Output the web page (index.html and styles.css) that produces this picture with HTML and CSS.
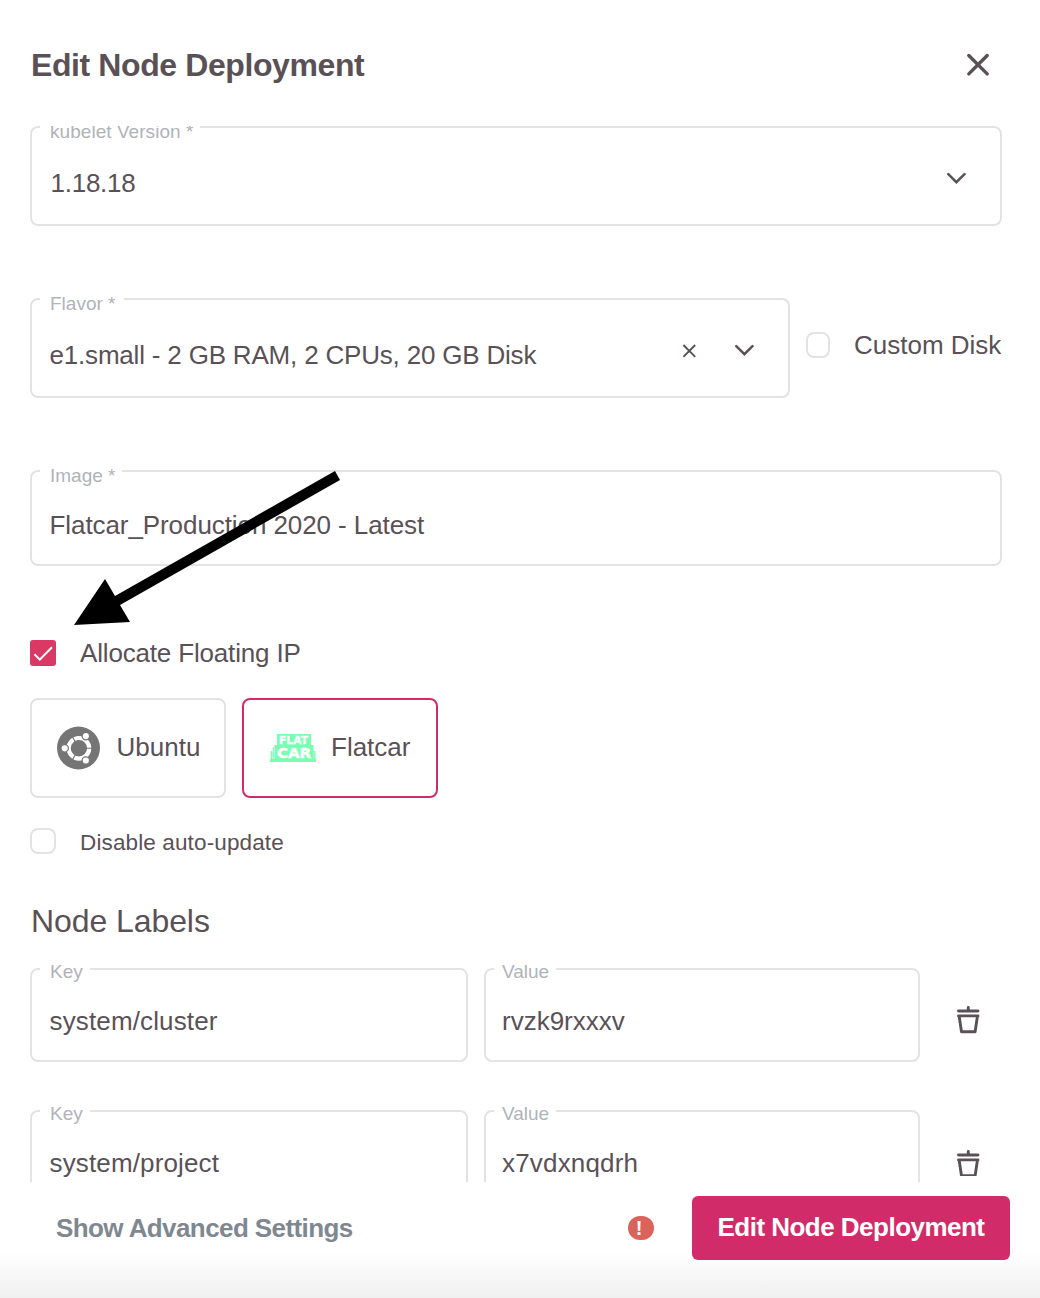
FILE: index.html
```html
<!DOCTYPE html>
<html lang="en">
<head>
<meta charset="utf-8">
<title>Edit Node Deployment</title>
<link rel="stylesheet" href="styles.css">
</head>
<body>
<div class="dialog">
  <header class="header">
    <h1 class="title">Edit Node Deployment</h1>
    <svg class="close" viewBox="0 0 24 24"><path d="M2.8 2.5 21.2 20.9M21.2 2.5 2.8 20.9"/></svg>
  </header>

  <main class="content">
    <div class="field tall">
      <span class="label kubelet">kubelet Version *</span>
      <span class="value version">1.18.18</span>
      <svg class="chevron" viewBox="0 0 20 12"><path d="M2.3 2.2 10.4 10.2 18.5 2.2"/></svg>
    </div>

    <div class="flavor-row">
      <div class="field tall flavor">
        <span class="label flavor-label">Flavor *</span>
        <span class="value flavor-value">e1.small - 2 GB RAM, 2 CPUs, 20 GB Disk</span>
        <svg class="clear" viewBox="0 0 14 14"><path d="M1.4 1 13.2 12.8M13.2 1 1.4 12.8"/></svg>
        <svg class="chevron" viewBox="0 0 20 12"><path d="M2.3 2.2 10.4 10.2 18.5 2.2"/></svg>
      </div>
      <span class="checkbox narrow"></span>
      <span class="text custom">Custom Disk</span>
    </div>

    <div class="field image">
      <span class="label image-label">Image *</span>
      <span class="value image-value">Flatcar_Production 2020 - Latest</span>
    </div>

    <div class="check-row floating">
      <span class="checkbox checked"><svg viewBox="0 0 26 26"><path d="M4.5 14.3 9.8 19.6 22 7.2"/></svg></span>
      <span class="text allocate">Allocate Floating IP</span>
    </div>

    <div class="systems">
      <div class="system">
        <svg class="ubuntu" viewBox="0 0 44 44">
          <circle cx="21.5" cy="22" r="21.5" fill="#757575"/>
          <circle cx="21.9" cy="22.3" r="10.3" fill="none" stroke="#fff" stroke-width="4.2"/>
          <g stroke="#757575" stroke-width="1.1"><path d="M29.3 22.3h7M18.6 16.4 14.9 10M18.6 28.2 14.9 34.6"/></g>
          <g fill="#fff" stroke="#757575" stroke-width="1.2"><circle cx="7.7" cy="22.3" r="3.7"/><circle cx="28.8" cy="10.1" r="3.7"/><circle cx="28.8" cy="34.5" r="3.7"/></g>
        </svg>
        <span class="text ubuntu-name">Ubuntu</span>
      </div>
      <div class="system selected">
        <svg class="flatcar" viewBox="0 0 46 28">
          <path fill="#77ffb3" d="M7 0H41V11H43.5V25H46V28H0V25H4.5V11H7ZM.8 17H2.4V26H.8ZM43.8 17H45.4V26H43.8ZM2.8 13H3.8V26H2.8Z"/>
          <text x="9" y="9.7" font-size="10.8" stroke-width=".3" textLength="29" lengthAdjust="spacingAndGlyphs">FLAT</text>
          <text x="7" y="24.2" font-size="14.2" stroke-width=".5" textLength="34" lengthAdjust="spacingAndGlyphs">CAR</text>
        </svg>
        <span class="text flatcar-name">Flatcar</span>
      </div>
    </div>

    <div class="check-row update">
      <span class="checkbox"></span>
      <span class="text disable">Disable auto-update</span>
    </div>

    <h2 class="section">Node Labels</h2>

    <div class="label-row">
      <div class="field key"><span class="label key-label">Key</span><span class="value cluster">system/cluster</span></div>
      <div class="field val"><span class="label value-label">Value</span><span class="value rv">rvzk9rxxxv</span></div>
      <svg class="trash" viewBox="0 0 24 28"><path d="M2.5 5H22M12.3 1.5V5M2.5 9.9H22M3.1 9.9 5.5 25.8H19.1L21.5 9.9"/></svg>
    </div>
    <div class="label-row">
      <div class="field key"><span class="label key-label">Key</span><span class="value project">system/project</span></div>
      <div class="field val"><span class="label value-label">Value</span><span class="value xv">x7vdxnqdrh</span></div>
      <svg class="trash lower" viewBox="0 0 24 26"><path d="M2.5 5H22M12.3 1.5V5M2.5 9.9H22M3.1 9.9 5.5 25.8H19.1L21.5 9.9"/></svg>
    </div>
  </main>

  <footer class="footer">
    <span class="advanced">Show Advanced Settings</span>
    <span class="alert">!</span>
    <button class="submit">Edit Node Deployment</button>
  </footer>

  <svg class="arrow" viewBox="0 0 270 160"><path d="M265 1 270 10 50 135 60 152 4 155 35 109 45 126Z"/></svg>
</div>
</body>
</html>
```
FILE: styles.css
```css
* { box-sizing: border-box; }
body { margin: 0; background: #fff; color: #5a5157; font-family: "Liberation Sans", Arial, sans-serif; }
svg { display: block; flex: none; fill: none; stroke: #5a5157; }
.dialog { position: relative; width: 1040px; height: 1298px; display: flex; flex-direction: column; overflow: hidden; }
.header { height: 126px; flex: none; display: flex; justify-content: space-between; align-items: center; padding: 4px 50px 0 31px; }
.title { margin: 0; font-size: 32px; line-height: 40px; letter-spacing: -.4px; white-space: nowrap; }
.close { width: 24px; height: 24px; stroke-width: 3.4; stroke-linecap: round; }
.content { height: 1056px; flex: none; overflow: hidden; padding: 0 38px 0 30px; }

.field { position: relative; display: flex; align-items: center; border: 2px solid #e2e3e3; border-radius: 8px; padding: 0 34px 0 17.5px; }
.tall { height: 100px; }
.label { position: absolute; left: 8px; top: -8px; height: 24px; padding-left: 10px; background: #fff; color: #b0b3b8; font-size: 19px; line-height: 24px; white-space: nowrap; }
.kubelet { width: 160px; letter-spacing: .05px; }
.flavor-label { width: 84px; }
.image-label { width: 82px; }
.key-label { width: 50px; }
.value-label { width: 62px; padding-left: 8px; }
.key-label, .value-label { top: -10px; }
.value, .text { font-size: 26px; line-height: 32px; white-space: nowrap; }
.value { flex: 1; padding-top: 13px; }
.version { padding-left: 1px; letter-spacing: -.25px; }
.flavor-value { letter-spacing: -.19px; }
.image-value { letter-spacing: -.08px; }
.allocate { letter-spacing: -.17px; }
.cluster, .project { letter-spacing: .14px; }
.xv { letter-spacing: .18px; }
.chevron { width: 20px; height: 12px; stroke-width: 2.5; stroke-linecap: round; margin-top: 4px; }
.clear { width: 14px; height: 14px; stroke-width: 1.9; margin: 5px 38px 0 0; }

.flavor-row { display: flex; margin-top: 72px; }
.flavor { width: 760px; }
.checkbox { width: 26px; height: 26px; flex: none; border: 2px solid #e2e3e3; border-radius: 8px; }
.narrow { width: 24px; margin: 34px 24px 0 16px; }
.custom { margin-top: 31px; }
.image { height: 96px; margin-top: 72px; }
.check-row { display: flex; align-items: center; gap: 24px; height: 26px; }
.floating { margin-top: 74px; }
.checked { border: 0; border-radius: 3px; background: #da3965; }
.checked svg { stroke: #fff; stroke-width: 2; }

.systems { display: flex; gap: 16px; margin-top: 32px; }
.system { width: 196px; height: 100px; display: flex; align-items: center; border: 2px solid #e2e3e3; border-radius: 8px; padding-left: 24.5px; }
.system .text { padding-bottom: 2px; }
.selected { border-color: #d12c69; padding-left: 26px; }
.ubuntu { width: 44px; height: 44px; margin-right: 16px; stroke: none; }
.flatcar { width: 46px; height: 28px; margin-right: 15px; stroke: none; }
.flatcar text { fill: #fff; stroke: #fff; font-family: "DejaVu Sans", sans-serif; font-weight: 700; }
.update { margin-top: 30px; }
.disable { font-size: 22.5px; letter-spacing: .13px; padding-top: 3px; }
.section { margin: 47px 0 0 1px; font-size: 32px; line-height: 40px; font-weight: 400; letter-spacing: -.08px; white-space: nowrap; }
.label-row { display: flex; gap: 16px; height: 94px; margin-top: 27px; }
.label-row + .label-row { margin-top: 48px; }
.key { width: 438px; }
.val { width: 436px; padding-left: 16px; }
.key, .val { height: 94px; }
.key .value, .val .value { padding-top: 11px; }
.trash { width: 24px; height: 28px; margin: 38px 0 0 20px; stroke-width: 2.9; stroke-linecap: round; stroke-linejoin: round; }
.lower { height: 26px; margin-top: 40px; overflow: hidden; }

.footer { flex: 1; display: flex; align-items: center; padding: 0 30px 24px 56px; background: linear-gradient(#fff 60%, #f0f0f0); }
.advanced { flex: 1; color: #7f8890; font-size: 26px; font-weight: 700; line-height: 32px; letter-spacing: -.59px; white-space: nowrap; }
.alert { width: 26px; height: 24px; border-radius: 12px; background: #dc625c; color: #fff; font-size: 20px; font-weight: 700; line-height: 24px; text-align: center; padding-right: 4px; margin-right: 38px; }
.submit { width: 318px; height: 64px; border: 0; border-radius: 6px; padding: 0 0 2px; background: #d12c69; color: #fff; font: 700 26px/32px "Liberation Sans", Arial, sans-serif; letter-spacing: -.52px; white-space: nowrap; }
.arrow { position: absolute; left: 70px; top: 470px; width: 270px; height: 160px; fill: #000; stroke: none; }
```
